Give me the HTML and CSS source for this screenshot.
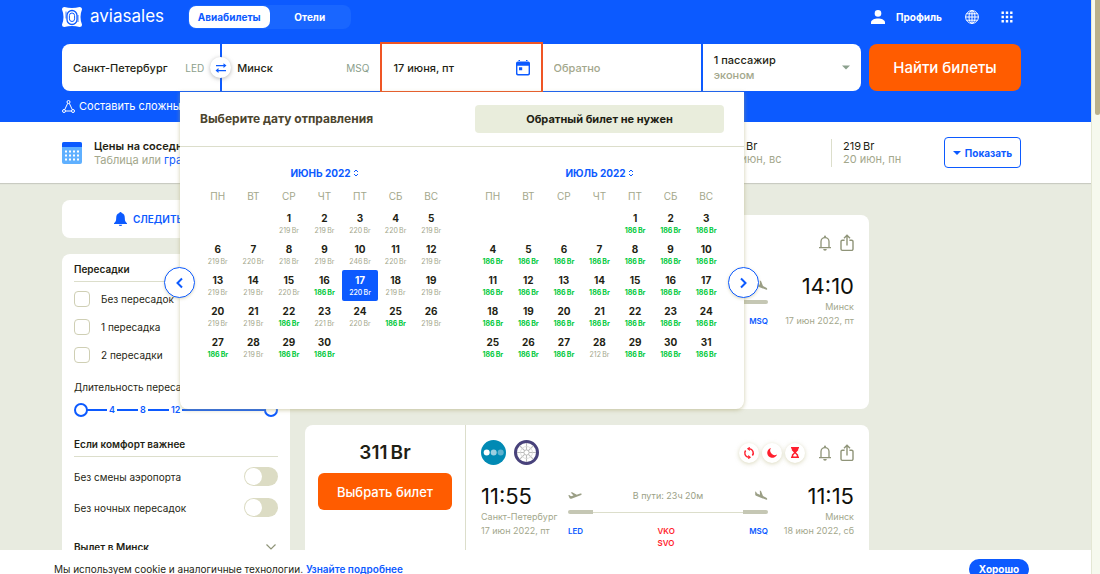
FILE: index.html
```html
<!DOCTYPE html>
<html lang="ru">
<head>
<meta charset="utf-8">
<title>Aviasales — Санкт-Петербург – Минск</title>
<meta name="viewport" content="width=device-width, initial-scale=1">
<link rel="stylesheet" href="styles.css">
</head>
<body>
<svg class="sprite" aria-hidden="true">
  <symbol id="bell" viewBox="0 0 14 16"><path d="M3 12V6.600a4 4 0 0 1 8 0V12M1 12.600h12" fill="none" stroke="currentColor" stroke-width="1.300"/><circle cx="7" cy="1.500" r="1" fill="currentColor"/><path d="M5.200 14h3.600a1.800 1.800 0 0 1-3.600 0z" fill="currentColor"/></symbol>
  <symbol id="share" viewBox="0 0 14 18"><path d="M4.600 6.200H2.400A1.400 1.400 0 0 0 1 7.600v7.400a1.400 1.400 0 0 0 1.400 1.400h9.200A1.400 1.400 0 0 0 13 15V7.600a1.400 1.400 0 0 0-1.400-1.400H9.400M7 11.500V1.500M4 4.200l3-3 3 3" fill="none" stroke="currentColor" stroke-width="1.400"/></symbol>
  <symbol id="takeoff" viewBox="0 0 14 10"><path d="M.3 4.300 1.300 4 3 5.200 5.500 4.600 2.700 1.600 4.200 1.200 8.800 3.800 12.300 2.500Q13.700 2.200 13.800 3 13.600 3.900 12.600 4.300L3.400 7.700Q2 8.100 1.500 7.100z" fill="currentColor"/></symbol>
  <symbol id="landing" viewBox="0 0 14 12"><path d="M1.200 1.500 2 1.700 3 3.600 6 4.800 5.800.6 7 1 9 6.100 12.300 7.700Q13.400 8.300 13.200 9.200 12.800 10 11.700 9.600L2 5.700Q1.200 5.300 1.200 4.500z" fill="currentColor"/></symbol>
</svg>
<div class="window">
<div class="app">
  <header class="header">
    <div class="topbar container">
      <a class="logo" href="#">
        <svg width="20" height="20" viewBox="0 0 20 20" aria-hidden="true"><path d="M2.500 0Q6 1 10 1t7.500-1Q20 0 20 2.500 18.500 6 18.500 10T20 17.500Q20 20 17.500 20 14 19 10 19t-7.500 1Q0 20 0 17.500 1.500 14 1.500 10T0 2.500Q0 0 2.500 0z" fill="#fff"/><rect x="5" y="3.500" width="10" height="14" rx="5" fill="none" stroke="#0c5aff" stroke-width="1.300"/><rect x="7.400" y="6" width="5.200" height="8.500" rx="2.600" fill="none" stroke="#0c5aff"/><path d="M4 4.500v7M16 8v7" stroke="#0c5aff" stroke-width=".8"/></svg>
        <span>aviasales</span>
      </a>
      <nav class="tabs">
        <a class="tab tab-active" href="#">Авиабилеты</a>
        <a class="tab" href="#">Отели</a>
      </nav>
      <div class="account">
        <a class="profile" href="#">
          <svg width="14" height="14" viewBox="0 0 14 14" aria-hidden="true"><circle cx="7" cy="3.400" r="3.300" fill="#fff"/><path d="M0 14v-1.500C0 10 3.500 8.500 7 8.500s7 1.500 7 4V14z" fill="#fff"/></svg>
          <span>Профиль</span>
        </a>
        <button class="icon-button" aria-label="Язык"><svg width="14" height="14" viewBox="0 0 14 14" fill="none" stroke="#fff"><circle cx="7" cy="7" r="6.400"/><ellipse cx="7" cy="7" rx="3" ry="6.400"/><path d="M.6 7h12.800M7 .6v12.800M1.500 3.800h11M1.500 10.200h11"/></svg></button>
        <button class="icon-button" aria-label="Сервисы"><svg width="12" height="12" viewBox="0 0 12 12" fill="#fff"><path d="M.5.500h2.400v2.400H.5zM4.800.500h2.400v2.400H4.800zM9.100.500h2.400v2.400H9.100zM.5 4.800h2.400v2.400H.5zM4.800 4.800h2.400v2.400H4.800zM9.100 4.800h2.400v2.400H9.100zM.5 9.100h2.400v2.400H.5zM4.800 9.100h2.400v2.400H4.800zM9.100 9.100h2.400v2.400H9.100z"/></svg></button>
      </div>
    </div>

    <form class="search container">
      <div class="fields">
        <label class="field"><input type="text" value="Санкт-Петербург" aria-label="Откуда"><span class="code code-from">LED</span></label>
        <div class="field">
          <button type="button" class="swap" aria-label="Поменять местами"><svg width="12" height="10" viewBox="0 0 12 10" fill="#0c5aff"><path d="M1 2h7.500V.2L11.500 2.600 8.500 5V3.300H1zM11 8.200H3.500V10L.5 7.400l3-2.400v1.900H11z"/></svg></button>
          <input type="text" value="Минск" aria-label="Куда"><span class="code">MSQ</span>
        </div>
        <label class="field field-active"><input type="text" value="17 июня, пт" aria-label="Туда">
          <svg width="14" height="16" viewBox="0 0 14 16" aria-hidden="true"><path d="M1.800 1.500h10.400A1.800 1.800 0 0 1 14 3.300v10.400a1.800 1.800 0 0 1-1.800 1.800H1.800A1.800 1.800 0 0 1 0 13.700V3.300a1.800 1.800 0 0 1 1.800-1.800zM1.400 5.800v7.500q0 .8.8.8h9.600q.8 0 .8-.8V5.800zM2.500 0h1.500v2H2.500zM10 0h1.500v2H10zM3 7.300h3.200v3H3z" fill="#0c5aff" fill-rule="evenodd"/></svg>
        </label>
        <label class="field"><input type="text" placeholder="Обратно" aria-label="Обратно"></label>
        <button type="button" class="field passengers">
          <span class="passengers-text">1 пассажир<span class="muted">эконом</span></span>
          <svg width="8" height="5" viewBox="0 0 8 5" fill="#8ba08d"><path d="M0 .5h8L4 4.500z"/></svg>
        </button>
      </div>
      <button type="button" class="find">Найти билеты</button>

      <section class="picker" aria-label="Выбор даты">
        <div class="picker-head">
          <h2>Выберите дату отправления</h2>
          <button type="button" class="one-way">Обратный билет не нужен</button>
        </div>
        <button type="button" class="arrow arrow-prev" aria-label="Предыдущий месяц"><svg width="7" height="12" viewBox="0 0 7 12"><path d="M6 1.500 1.500 6 6 10.500" fill="none" stroke="#0c5aff" stroke-width="2"/></svg></button>
        <button type="button" class="arrow arrow-next" aria-label="Следующий месяц"><svg width="7" height="12" viewBox="0 0 7 12"><path d="M1 1.500 5.500 6 1 10.500" fill="none" stroke="#0c5aff" stroke-width="2"/></svg></button>
        <div class="months">
          <div class="month">
            <button type="button" class="month-name">ИЮНЬ 2022 <svg width="6" height="8" viewBox="0 0 6 8"><path d="M1 3l2-2 2 2M1 5l2 2 2-2" fill="none" stroke="#0c5aff"/></svg></button>
            <table>
              <thead><tr><th>ПН</th><th>ВТ</th><th>СР</th><th>ЧТ</th><th>ПТ</th><th>СБ</th><th>ВС</th></tr></thead>
              <tbody>
                <tr><td></td><td></td><td>1<small>219&thinsp;Br</small></td><td>2<small>219&thinsp;Br</small></td><td>3<small>220&thinsp;Br</small></td><td>4<small>220&thinsp;Br</small></td><td>5<small>219&thinsp;Br</small></td></tr>
                <tr><td>6<small>219&thinsp;Br</small></td><td>7<small>220&thinsp;Br</small></td><td>8<small>218&thinsp;Br</small></td><td>9<small>219&thinsp;Br</small></td><td>10<small>246&thinsp;Br</small></td><td>11<small>220&thinsp;Br</small></td><td>12<small>219&thinsp;Br</small></td></tr>
                <tr><td>13<small>219&thinsp;Br</small></td><td>14<small>219&thinsp;Br</small></td><td>15<small>220&thinsp;Br</small></td><td>16<small class="low">186&thinsp;Br</small></td><td class="selected">17<small>220&thinsp;Br</small></td><td>18<small>219&thinsp;Br</small></td><td>19<small>219&thinsp;Br</small></td></tr>
                <tr><td>20<small>219&thinsp;Br</small></td><td>21<small>219&thinsp;Br</small></td><td>22<small class="low">186&thinsp;Br</small></td><td>23<small>221&thinsp;Br</small></td><td>24<small>220&thinsp;Br</small></td><td>25<small class="low">186&thinsp;Br</small></td><td>26<small>219&thinsp;Br</small></td></tr>
                <tr><td>27<small class="low">186&thinsp;Br</small></td><td>28<small>219&thinsp;Br</small></td><td>29<small class="low">186&thinsp;Br</small></td><td>30<small class="low">186&thinsp;Br</small></td><td></td><td></td><td></td></tr>
              </tbody>
            </table>
          </div>
          <div class="month">
            <button type="button" class="month-name">ИЮЛЬ 2022 <svg width="6" height="8" viewBox="0 0 6 8"><path d="M1 3l2-2 2 2M1 5l2 2 2-2" fill="none" stroke="#0c5aff"/></svg></button>
            <table>
              <thead><tr><th>ПН</th><th>ВТ</th><th>СР</th><th>ЧТ</th><th>ПТ</th><th>СБ</th><th>ВС</th></tr></thead>
              <tbody>
                <tr><td></td><td></td><td></td><td></td><td>1<small class="low">186&thinsp;Br</small></td><td>2<small class="low">186&thinsp;Br</small></td><td>3<small class="low">186&thinsp;Br</small></td></tr>
                <tr><td>4<small class="low">186&thinsp;Br</small></td><td>5<small class="low">186&thinsp;Br</small></td><td>6<small class="low">186&thinsp;Br</small></td><td>7<small class="low">186&thinsp;Br</small></td><td>8<small class="low">186&thinsp;Br</small></td><td>9<small class="low">186&thinsp;Br</small></td><td>10<small class="low">186&thinsp;Br</small></td></tr>
                <tr><td>11<small class="low">186&thinsp;Br</small></td><td>12<small class="low">186&thinsp;Br</small></td><td>13<small class="low">186&thinsp;Br</small></td><td>14<small class="low">186&thinsp;Br</small></td><td>15<small class="low">186&thinsp;Br</small></td><td>16<small class="low">186&thinsp;Br</small></td><td>17<small class="low">186&thinsp;Br</small></td></tr>
                <tr><td>18<small class="low">186&thinsp;Br</small></td><td>19<small class="low">186&thinsp;Br</small></td><td>20<small class="low">186&thinsp;Br</small></td><td>21<small class="low">186&thinsp;Br</small></td><td>22<small class="low">186&thinsp;Br</small></td><td>23<small class="low">186&thinsp;Br</small></td><td>24<small class="low">186&thinsp;Br</small></td></tr>
                <tr><td>25<small class="low">186&thinsp;Br</small></td><td>26<small class="low">186&thinsp;Br</small></td><td>27<small class="low">186&thinsp;Br</small></td><td>28<small>212&thinsp;Br</small></td><td>29<small class="low">186&thinsp;Br</small></td><td>30<small class="low">186&thinsp;Br</small></td><td>31<small class="low">186&thinsp;Br</small></td></tr>
              </tbody>
            </table>
          </div>
        </div>
      </section>
    </form>

    <div class="container">
      <a class="complex" href="#"><svg width="13" height="13" viewBox="0 0 13 13" fill="none" stroke="#fff"><circle cx="6.500" cy="2" r="1.500"/><circle cx="2" cy="11" r="1.500"/><circle cx="11" cy="11" r="1.500"/><path d="M5.700 3.300 2.700 9.700M7.300 3.300l3 6.400M3.500 11h6"/></svg>Составить сложный</a>
    </div>
  </header>

  <section class="nearby">
    <div class="container nearby-row">
      <svg width="20" height="22" viewBox="0 0 20 22" aria-hidden="true"><rect y="0" width="20" height="22" rx="2" fill="#5fb0ff"/><path d="M0 5V2a2 2 0 0 1 2-2h16a2 2 0 0 1 2 2v3z" fill="#0c5aff"/><path d="M3 9.500h14M3 13.500h14M3 17.500h14" stroke="#fff" stroke-width="2" stroke-dasharray="2 2"/></svg>
      <div class="nearby-title"><strong>Цены на соседние</strong><span class="muted">Таблица или <a href="#">график</a></span></div>
      <div class="nearby-price">219&thinsp;Br<span class="muted">19 июн, вс</span></div>
      <div class="nearby-price nearby-last">219&thinsp;Br<span class="muted">20 июн, пн</span></div>
      <button class="show"><svg width="8" height="4" viewBox="0 0 8 4" fill="#0c5aff"><path d="M0 0h8L4 4z"/></svg>Показать</button>
    </div>
  </section>

  <main class="results container">
    <aside class="sidebar">
      <button class="card follow"><svg width="13" height="14" viewBox="0 0 13 14" fill="#0c5aff"><path d="M6.500 0q1 0 1.200 1C10 1.500 10.800 3.500 10.800 6c0 3 .7 4 2.200 5.200v.8H0v-.8C1.500 10 2.200 9 2.200 6 2.200 3.500 3 1.500 5.300 1q.2-1 1.200-1zM4.800 12.700h3.400a1.700 1.300 0 0 1-3.400 0z"/></svg>СЛЕДИТЬ ЗА ЦЕНОЙ</button>
      <div class="card filters">
        <h3>Пересадки</h3>
        <div class="checks">
          <label><input type="checkbox" class="check">Без пересадок</label>
          <label><input type="checkbox" class="check">1 пересадка</label>
          <label><input type="checkbox" class="check">2 пересадки</label>
        </div>
        <div class="duration">Длительность пересадки</div>
        <div class="slider">
          <div class="track"><i class="first"></i><b>4</b><i></i><b>8</b><i></i><b>12</b><i class="rest"></i></div>
          <input type="range" min="0" max="24" value="0" aria-label="Минимальная длительность">
          <input type="range" min="0" max="24" value="24" aria-label="Максимальная длительность">
        </div>
        <h3>Если комфорт важнее</h3>
        <div class="toggles">
          <label>Без смены аэропорта<input type="checkbox" role="switch" class="switch"></label>
          <label>Без ночных пересадок<input type="checkbox" role="switch" class="switch"></label>
        </div>
        <button class="section-toggle">Вылет в Минск<svg width="10" height="6" viewBox="0 0 10 6"><path d="M.5.500 5 5 9.500.500" fill="none" stroke="#8f9478" stroke-width="1.200"/></svg></button>
      </div>
    </aside>

    <div class="tickets">
      <article class="card ticket">
        <div class="offer"></div>
        <div class="flight">
          <div class="flight-top"><div class="tools"><button class="icon-button" aria-label="Следить"><svg width="14" height="16"><use href="#bell"/></svg></button><button class="icon-button" aria-label="Поделиться"><svg width="14" height="18"><use href="#share"/></svg></button></div></div>
          <div class="leg">
            <div class="end"></div>
            <div class="route">
              <div class="planes"><svg width="14" height="10"><use href="#takeoff"/></svg><svg width="14" height="12"><use href="#landing"/></svg></div>
              <div class="line"></div>
              <div class="airports airports-end"><span>MSQ</span></div>
            </div>
            <div class="end end-right"><time>14:10</time><span>Минск</span><span>17 июн 2022, пт</span></div>
          </div>
        </div>
      </article>
      <article class="card ticket">
        <div class="offer"><div class="price">311&thinsp;Br</div><button class="choose">Выбрать билет</button></div>
        <div class="flight">
          <div class="flight-top">
            <svg width="25" height="25" viewBox="0 0 25 25" aria-hidden="true"><circle cx="12.500" cy="12.500" r="12.500" fill="#018ab4"/><circle cx="5.700" cy="12.500" r="3" fill="#fff"/><circle cx="12.700" cy="12.500" r="3" fill="#9dcfe0"/><circle cx="19.700" cy="12.500" r="3" fill="#5fb2cf"/></svg>
            <svg width="25" height="25" viewBox="0 0 25 25" aria-hidden="true"><circle cx="12.500" cy="12.500" r="11" fill="#fff" stroke="#48427b" stroke-width="3"/><g fill="none" stroke="#bcbcbc" stroke-width="1.100"><path d="M12.500 3v19M3 12.500h19M5.800 5.800l13.400 13.400M19.200 5.800 5.800 19.200"/></g><circle cx="12.500" cy="12.500" r="6" fill="none" stroke="#d8d8d8" stroke-width=".8"/><circle cx="12.500" cy="12.500" r="2.600" fill="#fff" stroke="#bcbcbc"/></svg>
            <div class="tools">
              <span class="badges">
                <span class="badge"><svg width="12" height="12" viewBox="0 0 12 12"><path d="M6.500 1.800A4.200 4.200 0 0 1 9.400 8.500M5.500 10.200A4.200 4.200 0 0 1 2.600 3.500" fill="none" stroke="#ff1f2e" stroke-width="1.500"/><path d="M6.800-.4v4.400L3.900 1.800zM5.200 8v4.400l2.900-2.200z" fill="#ff1f2e"/></svg></span>
                <span class="badge"><svg width="10" height="10" viewBox="0 0 10 10"><path d="M4 0a4.500 4.500 0 0 0 6 6.400A5 5 0 1 1 4 0z" fill="#ff1f2e"/></svg></span>
                <span class="badge"><svg width="8" height="11" viewBox="0 0 8 11"><path d="M0 0h8v1.500H7.200v1.800L5 5.500l2.200 2.200v1.800H8V11H0V9.500h.8V7.700L3 5.500.8 3.300V1.500H0zM4 6.500l-1.700 1.700v1.300h3.400V8.200z" fill="#ff1f2e" fill-rule="evenodd"/></svg></span>
              </span>
              <button class="icon-button" aria-label="Следить"><svg width="14" height="16"><use href="#bell"/></svg></button><button class="icon-button" aria-label="Поделиться"><svg width="14" height="18"><use href="#share"/></svg></button>
            </div>
          </div>
          <div class="leg">
            <div class="end"><time>11:55</time><span>Санкт-Петербург</span><span>17 июн 2022, пт</span></div>
            <div class="route">
              <div class="planes"><svg width="14" height="10"><use href="#takeoff"/></svg><span>В пути: 23ч 20м</span><svg width="14" height="12"><use href="#landing"/></svg></div>
              <div class="line"></div>
              <div class="airports"><span>LED</span><span class="stops">VKO<br>SVO</span><span>MSQ</span></div>
            </div>
            <div class="end end-right"><time>11:15</time><span>Минск</span><span>18 июн 2022, сб</span></div>
          </div>
        </div>
      </article>
    </div>
  </main>

  <footer class="cookies">
    <p>Мы используем cookie и аналогичные технологии. <a href="#">Узнайте подробнее</a></p>
    <button class="ok">Хорошо</button>
  </footer>
</div>
<div class="scrollbar" aria-hidden="true"><div class="thumb"></div></div>
</div>
</body>
</html>
```
FILE: styles.css
```css
:root {
  --blue: #0c5aff;
  --orange: #ff5c00;
  --ink: #1f1f14;
  --muted: #a3a78c;
  --bg: #e8ebe0;
  --line: #dcdecb;
}
* { box-sizing: border-box; }
body {
  margin: 0;
  font: 11px/14px Inter, "Liberation Sans", sans-serif;
  color: var(--ink);
  background: var(--bg);
}
button, input { font: inherit; color: inherit; }
button { border: 0; background: none; padding: 0; cursor: pointer; }
a { color: var(--blue); text-decoration: none; }
svg { flex: none; display: block; }
h2, h3, p { margin: 0; }
.sprite { position: absolute; width: 0; height: 0; }
.muted { color: var(--muted); }

.window { display: flex; height: 100vh; overflow: hidden; }
.app { flex: 1; min-width: 0; display: flex; flex-direction: column; }
.scrollbar { width: 9px; padding-left: 3px; background: #f6f9ee; border-left: 1px solid #e4e7d4; }
.thumb { height: 20%; background: #b9b18c; border-radius: 0 0 3px 3px; }
.container { margin: 0 70px 0 62px; }

.header { flex: none; background: var(--blue); color: #fff; height: 122px; }
.topbar { display: flex; align-items: center; height: 34px; margin-bottom: 10px; }
.logo { display: flex; align-items: center; gap: 8px; width: 126px; color: #fff; font-size: 17px; line-height: 20px; }
.logo span { padding-bottom: 2px; }
.tabs { display: grid; grid-template-columns: 1fr 1fr; width: 163px; height: 24px; padding: 1px; border-radius: 8px; background: #1966ff; }
.tab { color: #fff; font-size: 10px; font-weight: 700; text-align: center; line-height: 22px; border-radius: 7px; }
.tab-active { background: #fff; color: var(--blue); }
.account { margin-left: auto; margin-right: 8px; display: flex; align-items: center; gap: 22px; }
.profile { display: flex; align-items: center; gap: 11px; margin-right: 1px; color: #fff; font-size: 10px; font-weight: 700; }

.search { position: relative; display: flex; gap: 8px; height: 47px; }
.fields { flex: 1; min-width: 0; display: grid; grid-template-columns: repeat(5, 1fr); gap: 2px; }
.field { position: relative; display: flex; align-items: center; min-width: 0; padding: 0 11px; background: #fff; color: var(--ink); font-size: 11px; font-weight: 500; }
.field:first-child { border-radius: 8px 0 0 8px; padding-right: 16px; }
.field:last-child { border-radius: 0 8px 8px 0; }
.field:nth-child(2) { padding-left: 15px; }
.field input { flex: 1; width: 0; min-width: 0; border: 0; outline: 0; padding: 0; background: none; }
.field input::placeholder { color: var(--muted); opacity: 1; }
.field-active { outline: 2px solid #ef5525; z-index: 2; }
.code { font-size: 10px; font-weight: 400; color: #8ba08d; }
.swap { position: absolute; left: -12px; top: 13px; width: 21px; height: 21px; border-radius: 50%; background: #fff; box-shadow: 0 1px 4px #7778; display: grid; place-items: center; }
.passengers { justify-content: space-between; text-align: left; }
.passengers-text { display: grid; line-height: 15px; }
.find { width: 152px; border-radius: 8px; background: var(--orange); color: #fff; font-size: 15px; font-weight: 500; }
.complex { display: flex; align-items: center; gap: 4px; height: 30px; color: #fff; }

.picker { position: absolute; z-index: 5; left: 118px; top: 48px; width: 564px; height: 317px; background: #fff; color: var(--ink); border-radius: 0 0 8px 8px; box-shadow: 0 1px 4px #a9a56a90; }
.picker-head { display: grid; grid-template-columns: 1fr 1fr; gap: 26px; align-items: center; padding: 13px 20px; border-bottom: 1px solid var(--line); }
.picker-head h2 { font-size: 12px; color: #4c452e; }
.one-way { height: 28px; border-radius: 4px; background: #e9eddc; font-weight: 700; }
.months { display: grid; grid-template-columns: 1fr 1fr; gap: 26px; padding: 18px 20px 0; }
.month-name { display: flex; align-items: center; justify-content: center; gap: 2px; width: 100%; height: 16px; color: var(--blue); font-size: 10px; font-weight: 700; }
.month table { width: 100%; margin-top: 5px; table-layout: fixed; border-collapse: collapse; }
.month th { height: 22px; padding: 0 0 2px; color: var(--muted); font-size: 10px; font-weight: 400; vertical-align: middle; }
.month td { height: 31px; padding: 3px 0 0; text-align: center; vertical-align: top; font-size: 10px; line-height: 15px; font-weight: 700; }
.month small { display: block; font-size: 7px; line-height: 9px; font-weight: 400; color: var(--muted); }
.month small.low { color: #00c93c; font-weight: 700; }
.month td.selected { background: var(--blue); color: #fff; border-radius: 2px; }
.month td.selected small { color: #fff; font-weight: 500; }
.arrow { position: absolute; top: 175px; width: 31px; height: 31px; border: 1px solid var(--blue); border-radius: 50%; background: #fff; display: grid; place-items: center; box-shadow: 0 1px 3px #a9a56a60; }
.arrow-prev { left: -16px; }
.arrow-next { right: -15px; }

.nearby { flex: none; background: #fff; box-shadow: 0 1px 1px #0002; }
.nearby-row { display: flex; align-items: center; height: 61px; }
.nearby-title { margin-left: 12px; display: grid; }
.nearby-title strong { font-weight: 600; }
.nearby-price { display: grid; margin-left: auto; width: 105px; padding: 8px 0; line-height: 13px; }
.nearby-last { margin-left: 0; width: 113px; border-left: 1px solid var(--line); padding: 1px 0 1px 11px; }
.show { display: flex; align-items: center; justify-content: center; gap: 4px; width: 77px; height: 31px; border: 1px solid var(--blue); border-radius: 4px; color: var(--blue); font-size: 10px; font-weight: 700; }

.results { flex: 1; min-height: 0; overflow: hidden; display: grid; grid-template-columns: 243px minmax(0, 1fr) 152px; grid-template-rows: max-content; padding-top: 17px; }
.card { background: #fff; border-radius: 8px; }
.sidebar { display: grid; gap: 16px; padding-right: 15px; align-content: start; }
.follow { display: flex; align-items: center; justify-content: center; gap: 6px; height: 38px; color: var(--blue); font-size: 10px; font-weight: 600; }
.filters { padding: 7px 12px; font-size: 10px; }
.filters h3 { font-size: 10px; line-height: 16px; font-weight: 600; padding-bottom: 4px; border-bottom: 1px solid var(--line); }
.checks { display: grid; gap: 12px; padding-top: 9px; }
.checks label { display: flex; align-items: center; gap: 11px; height: 16px; }
.check { appearance: none; width: 16px; height: 16px; margin: 0; border: 1px solid #cfcfb4; border-radius: 4px; }
.duration { margin-top: 17px; }
.slider { position: relative; height: 14px; margin: 9px 0 19px; }
.slider input { position: absolute; inset: 0; width: 100%; height: 14px; margin: 0; appearance: none; background: none; pointer-events: none; }
.slider input::-webkit-slider-thumb { appearance: none; width: 14px; height: 14px; border: 2px solid var(--blue); border-radius: 50%; background: #fff; pointer-events: auto; }
.track { display: flex; align-items: center; gap: 2px; height: 14px; padding: 0 13px; color: var(--blue); font-size: 9px; }
.track b { min-width: 6px; font-weight: 600; text-align: center; }
.track i { width: 21px; height: 2px; background: var(--blue); }
.track .first { width: 20px; }
.track .rest { flex: 1; }
.toggles { display: grid; gap: 12px; padding: 10px 0 22px; }
.toggles label { display: flex; align-items: center; justify-content: space-between; height: 19px; }
.switch { appearance: none; position: relative; width: 34px; height: 19px; margin: 0; border-radius: 10px; background: #dcdcc4; }
.switch::before { content: ""; position: absolute; left: 1px; top: 1px; width: 17px; height: 17px; border-radius: 50%; background: #fff; }
.section-toggle { display: flex; align-items: center; justify-content: space-between; width: 100%; height: 16px; padding-right: 2px; font-weight: 600; }

.tickets { display: grid; gap: 16px; padding-top: 15px; align-content: start; }
.ticket { display: grid; grid-template-columns: 161px minmax(0, 1fr); min-height: 194px; }
.offer { padding: 16px 13px; border-right: 1px solid var(--line); text-align: center; }
.price { font-size: 19px; line-height: 24px; font-weight: 600; }
.choose { width: 100%; height: 37px; margin-top: 8px; border-radius: 6px; background: var(--orange); color: #fff; font-size: 13px; font-weight: 500; }
.flight { padding: 15px 15px; }
.flight-top { display: flex; align-items: center; gap: 8px; height: 25px; }
.tools { margin-left: auto; display: flex; align-items: center; gap: 8px; color: #8f9478; }
.badges { display: flex; gap: 3px; margin-right: 5px; }
.badge { width: 20px; height: 20px; border-radius: 50%; background: #fff; box-shadow: 0 1px 4px #b5b17a80; display: grid; place-items: center; }
.leg { display: grid; grid-template-columns: 87px minmax(0, 1fr) 86px; padding-top: 18px; color: var(--muted); font-size: 9px; }
.end { display: grid; align-content: start; line-height: 14px; white-space: nowrap; }
.end time { color: #10100c; font-size: 22px; line-height: 26px; margin-bottom: 1px; }
.end-right { text-align: right; }
.planes { display: flex; align-items: center; justify-content: space-between; height: 26px; color: #9b9f86; }
.line { height: 4px; margin-top: 1px; background: linear-gradient(#c5c7b4, #c5c7b4) left / 25px 4px no-repeat, linear-gradient(#c5c7b4, #c5c7b4) right / 25px 4px no-repeat, linear-gradient(#dcdecb, #dcdecb) center / 100% 1px no-repeat; border-radius: 2px; }
.airports { display: flex; justify-content: space-between; padding-top: 11px; color: var(--blue); font-size: 8px; line-height: 12px; font-weight: 600; }
.airports .stops { color: #ff1f2e; }
.airports-end { justify-content: flex-end; }

.cookies { flex: none; position: relative; z-index: 6; display: flex; align-items: flex-start; justify-content: space-between; height: 24px; padding: 9px 62px 0 54px; overflow: hidden; background: #fff; font-size: 10px; line-height: 20px; }
.cookies a { font-weight: 600; }
.ok { width: 60px; height: 20px; border-radius: 10px; background: var(--blue); color: #fff; font-weight: 700; }
```
